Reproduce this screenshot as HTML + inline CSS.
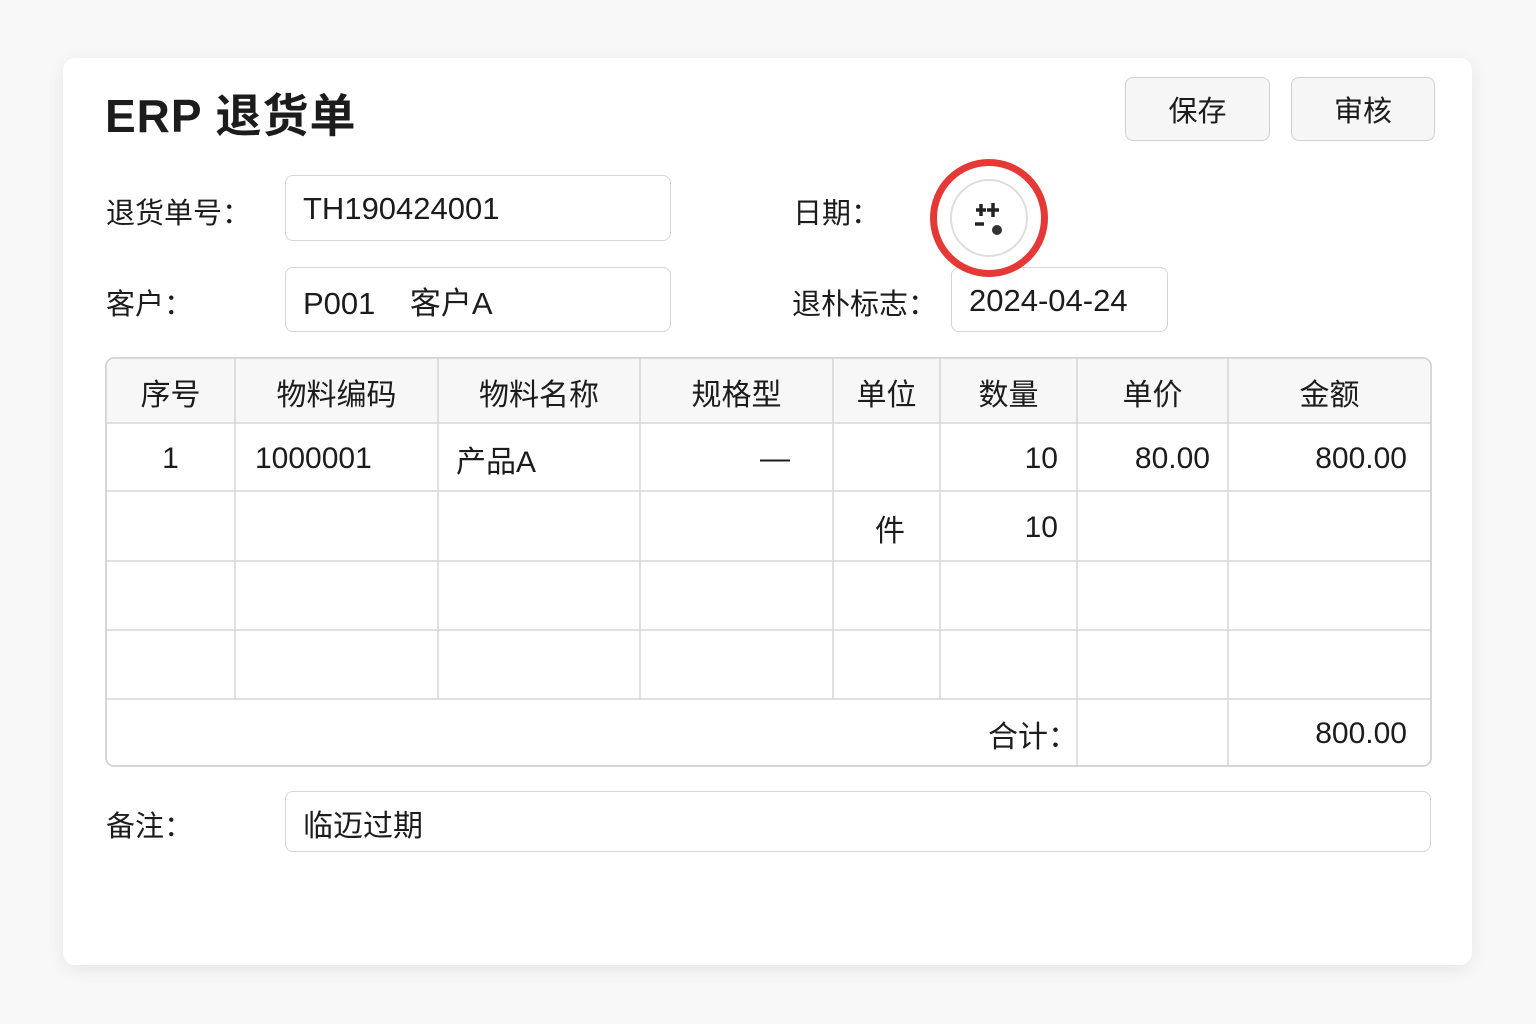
<!DOCTYPE html>
<html><head><meta charset="utf-8"><style>
*{margin:0;padding:0;box-sizing:border-box}
body{width:1536px;height:1024px;background:#f8f8f8;font-family:"Liberation Sans","Noto Sans CJK SC",sans-serif;color:#1c1c1c;position:relative;overflow:hidden}
.card{position:absolute;left:63px;top:58px;width:1409px;height:907px;background:#fff;border-radius:12px;box-shadow:0 4px 18px rgba(0,0,0,.08)}
.a{position:absolute;white-space:nowrap}
.lbl{font-size:29px}
.box{position:absolute;border:1.5px solid #d4d4d4;border-radius:8px;background:#fff;font-size:31px;padding-left:17px;padding-top:2px;display:flex;align-items:center}
.btn{position:absolute;border:1.5px solid #d0d0d0;border-radius:8px;background:#f6f6f6;font-size:29px;display:flex;align-items:center;justify-content:center}
.t{position:absolute;font-size:30px;white-space:nowrap;display:flex;align-items:center;padding-top:3px}
</style></head><body>
<div class="card"></div>
<div class="a" style="left:105px;top:80px;font-size:46px;font-weight:bold;letter-spacing:1px">ERP 退货单</div>
<div class="btn" style="left:1125px;top:77px;width:145px;height:64px">保存</div>
<div class="btn" style="left:1291px;top:77px;width:144px;height:64px">审核</div>

<div class="a lbl" style="left:106px;top:190px">退货单号：</div>
<div class="box" style="left:285px;top:175px;width:386px;height:66px">TH190424001</div>
<div class="a lbl" style="left:106px;top:281px">客户：</div>
<div class="box" style="left:285px;top:267px;width:386px;height:65px">P001&nbsp;&nbsp;&nbsp;&nbsp;客户A</div>
<div class="a lbl" style="left:793px;top:190px">日期：</div>
<div class="a lbl" style="left:792px;top:281px">退朴标志：</div>
<div class="box" style="left:951px;top:267px;width:217px;height:65px">2024-04-24</div>
<div class="a" style="left:930px;top:159px;width:118px;height:118px;border:7px solid #e53935;border-radius:50%;background:#fff"></div>
<div class="a" style="left:950px;top:179px;width:78px;height:78px;border:2px solid #ddd;border-radius:50%"></div>
<svg class="a" style="left:970px;top:196px" width="40" height="44"><g stroke="#222" stroke-width="3.5"><path d="M6 14h10M11 8v12M17 14h12M23 7v14M5 28h9"/></g><circle cx="27" cy="34" r="5" fill="#333"/></svg>

<svg class="a" style="left:105px;top:357px" width="1328" height="411">
<rect x="1" y="1" width="1325" height="408" rx="8" fill="#fff" stroke="#d0d0d0" stroke-width="1.5"/>
<path d="M9 1h1309a8 8 0 0 1 8 8v57H1V9a8 8 0 0 1 8-8z" fill="#f7f7f7"/>
<g stroke="#d6d6d6" stroke-width="1.5">
<path d="M1 66h1325M1 134h1325M1 204h1325M1 273h1325M1 342h1325"/>
<path d="M130 1v341M333 1v341M535 1v341M728 1v341M835 1v341M972 1v408M1123 1v408"/>
</g>
<rect x="1" y="1" width="1325" height="408" rx="8" fill="none" stroke="#d0d0d0" stroke-width="1.5"/>
</svg>
<div class="t" style="left:106px;top:358px;width:129px;height:65px;justify-content:center">序号</div>
<div class="t" style="left:235px;top:358px;width:203px;height:65px;justify-content:center">物料编码</div>
<div class="t" style="left:438px;top:358px;width:202px;height:65px;justify-content:center">物料名称</div>
<div class="t" style="left:640px;top:358px;width:193px;height:65px;justify-content:center">规格型</div>
<div class="t" style="left:833px;top:358px;width:107px;height:65px;justify-content:center">单位</div>
<div class="t" style="left:940px;top:358px;width:137px;height:65px;justify-content:center">数量</div>
<div class="t" style="left:1077px;top:358px;width:151px;height:65px;justify-content:center">单价</div>
<div class="t" style="left:1228px;top:358px;width:203px;height:65px;justify-content:center">金额</div>

<div class="t" style="left:106px;top:423px;width:129px;height:68px;justify-content:center">1</div>
<div class="t" style="left:255px;top:423px;height:68px">1000001</div>
<div class="t" style="left:456px;top:423px;height:68px">产品A</div>
<div class="t" style="left:760px;top:423px;height:68px">—</div>
<div class="t" style="left:940px;top:423px;width:118px;height:68px;justify-content:flex-end">10</div>
<div class="t" style="left:1077px;top:423px;width:133px;height:68px;justify-content:flex-end">80.00</div>
<div class="t" style="left:1228px;top:423px;width:179px;height:68px;justify-content:flex-end">800.00</div>
<div class="t" style="left:875px;top:491px;height:70px">件</div>
<div class="t" style="left:940px;top:491px;width:118px;height:70px;justify-content:flex-end">10</div>
<div class="t" style="left:988px;top:699px;height:67px">合计：</div>
<div class="t" style="left:1228px;top:699px;width:179px;height:67px;justify-content:flex-end">800.00</div>

<div class="a lbl" style="left:106px;top:803px">备注：</div>
<div class="box" style="left:285px;top:791px;width:1146px;height:61px;font-size:30px">临迈过期</div>
</body></html>
